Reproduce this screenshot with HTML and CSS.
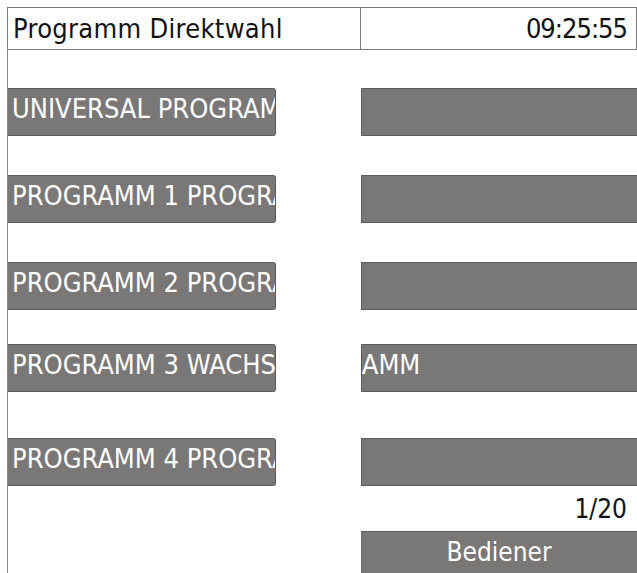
FILE: index.html
```html
<!DOCTYPE html>
<html>
<head>
<meta charset="utf-8">
<link rel="stylesheet" href="styles.css">
</head>
<body>
<div class="screen">
  <div class="header">
    <div class="title">Programm Direktwahl</div>
    <div class="clock">09:25:55</div>
  </div>
  <div class="main">
    <div class="row r1">
      <div class="bar left"><span>UNIVERSAL PROGRAMM</span></div>
      <div class="bar right"></div>
    </div>
    <div class="row r2">
      <div class="bar left"><span>PROGRAMM 1 PROGRAMM</span></div>
      <div class="bar right"></div>
    </div>
    <div class="row r3">
      <div class="bar left"><span>PROGRAMM 2 PROGRAMM</span></div>
      <div class="bar right"></div>
    </div>
    <div class="row r4">
      <div class="bar left"><span>PROGRAMM 3 WACHSPROGRAMM</span></div>
      <div class="bar right cont"><span class="cut3">RAMM</span></div>
    </div>
    <div class="row r5">
      <div class="bar left"><span>PROGRAMM 4 PROGRAMM</span></div>
      <div class="bar right cont"><span class="cut4">)</span></div>
    </div>
    <div class="footer">
      <div class="page">1/20</div>
      <div class="btn">Bediener</div>
    </div>
  </div>
</div>
</body>
</html>
```
FILE: styles.css
```css
html, body {
  margin: 0;
  padding: 0;
  background: #ffffff;
  width: 637px;
  height: 573px;
  overflow: hidden;
}
.screen {
  padding: 7px 0 0 7px;
  font-family: "DejaVu Sans Condensed", "DejaVu Sans", sans-serif;
  font-stretch: condensed;
  font-size: 27px;
}
.header {
  display: flex;
  height: 41px;
  border: 1px solid #7a7a7a;
  width: 628px;
  color: #111;
}
.title {
  width: 353px;
  border-right: 1px solid #7a7a7a;
  padding-left: 5px;
  line-height: 42px;
  white-space: nowrap;
  letter-spacing: 0.3px;
  box-sizing: border-box;
}
.clock {
  flex: 1;
  text-align: right;
  padding-right: 9px;
  line-height: 42px;
  letter-spacing: -1px;
}
.main {
  border-left: 1px solid #8a8a8a;
  height: 540px;
  display: flex;
  flex-direction: column;
}
.row {
  display: flex;
  height: 48px;
  margin-top: 39px;
}
.r1 { margin-top: 38px; }
.r4 { margin-top: 34px; }
.r5 { margin-top: 46px; }
.bar {
  background: #7a7777;
  border: 1px solid #5d5b5b;
  box-sizing: border-box;
  color: #ffffff;
  overflow: hidden;
  white-space: nowrap;
  line-height: 46px;
}
.left {
  width: 268px;
  border-left: none;
  border-radius: 0 3px 3px 0;
}
.left span {
  display: block;
  padding-left: 4px;
  margin-top: -3px;
}
.right {
  margin-left: 85px;
  flex: 1;
  border-right: none;
}
.cont span {
  display: block;
  margin-top: -3px;
}
.cut3 { margin-left: -16px; }
.cut4 { margin-left: -8px; }
.footer {
  display: flex;
  flex-direction: column;
  align-items: flex-end;
}
.page {
  margin-top: 7px;
  padding-right: 10px;
  font-size: 26px;
  line-height: 32px;
  color: #111;
}
.btn {
  margin-top: 6px;
  align-self: stretch;
  margin-left: 353px;
  height: 48px;
  background: #7a7777;
  border-top: 1px solid #5d5b5b;
  color: #fff;
  text-align: center;
  line-height: 40px;
  font-size: 26px;
}
```
